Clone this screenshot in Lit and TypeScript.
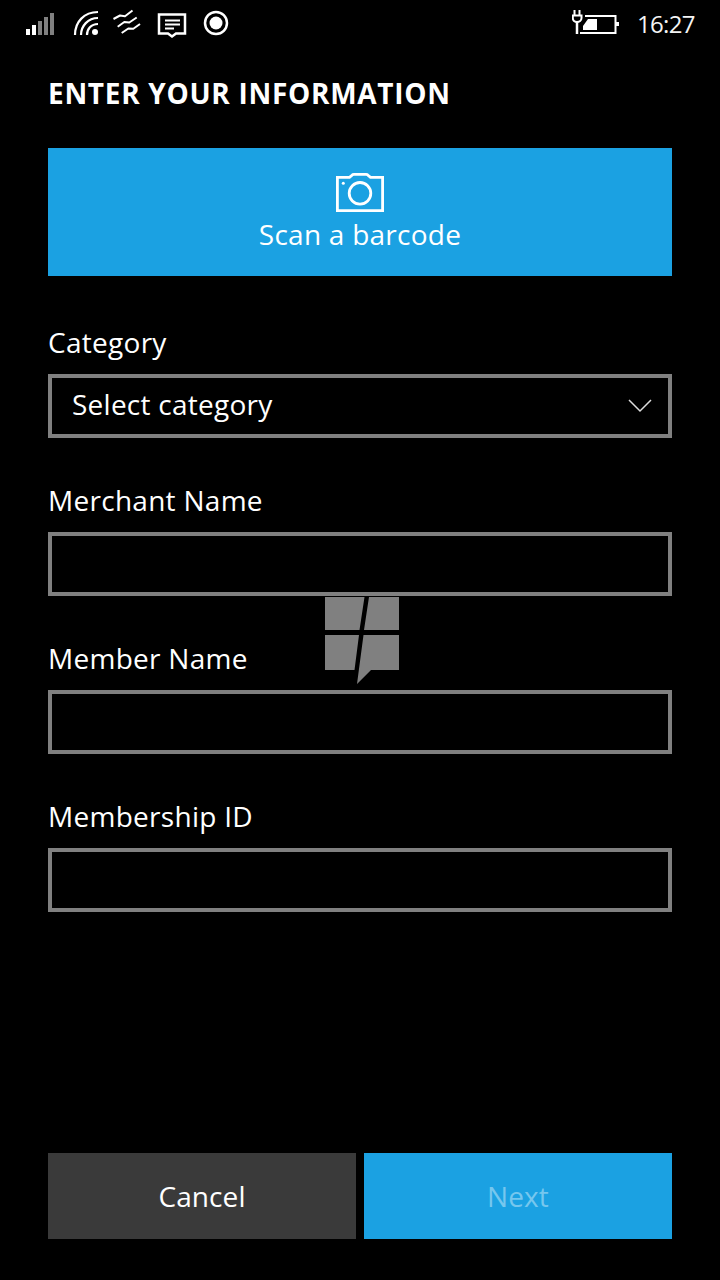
import { LitElement, html, css } from "lit";
import { customElement } from "lit/decorators.js";

@customElement("app-root")
class AppRoot extends LitElement {
  static styles = css`
    :host { display: block; width: 720px; height: 1280px; background: #000; color: #fff; font-family: "Open Sans", "Noto Sans", sans-serif; position: relative; overflow: hidden; }
    .status { height: 48px; display: flex; align-items: flex-start; }
    .status svg { display: block; flex: none; }
    .time { font-size: 24px; line-height: 48px; font-weight: 400; width: 57px; margin: 0 26px 0 15px; letter-spacing: -0.7px; color: #f4f4f4; white-space: nowrap; }
    .spacer { flex: 1; }
    .content { display: flex; flex-direction: column; padding: 0 48px; height: 1232px; box-sizing: border-box; }
    h1 { margin: 27px 0 0; font-size: 28px; line-height: 36px; font-weight: 700; height: 37px; letter-spacing: 0.7px; }
    .scan { margin-top: 36px; height: 128px; background: #1ba1e2; display: flex; flex-direction: column; align-items: center; box-sizing: border-box; padding-top: 24px; }
    .scan span { font-size: 28px; line-height: 40px; margin-top: 2px; letter-spacing: 0.25px; }
    .field { display: flex; flex-direction: column; margin-top: 48px; }
    label { font-size: 28px; line-height: 36px; height: 50px; letter-spacing: 0.28px; }
    .box { height: 64px; border: 4px solid #808080; box-sizing: border-box; display: flex; align-items: center; justify-content: space-between; padding: 0 16px 0 20px; font-size: 28px; letter-spacing: 0.25px; }
    .box span { position: relative; top: -2px; }
    .field + .field { margin-top: 44px; }
    .actions { margin-top: auto; margin-bottom: 41px; display: flex; gap: 8px; }
    .btn { flex: 1; height: 86px; display: flex; align-items: center; justify-content: center; font-size: 28px; letter-spacing: 0.1px; }
    .cancel { background: #3a3a3a; }
    .next { background: #1ba1e2; color: #76c7ee; }
    .logo { position: absolute; left: 325px; top: 597px; display: block; }
  `;

  render() {
    return html`
      <div class="status">
        <svg width="240" height="48" viewBox="0 0 240 48" fill="none">
          <g fill="#fff"><rect x="26" y="29" width="4" height="6"/><rect x="32" y="25" width="4" height="10"/></g>
          <g fill="#808080"><rect x="38" y="21" width="4" height="14"/><rect x="44" y="17" width="4" height="18"/><rect x="50" y="13" width="4" height="22"/></g>
          <g stroke="#fff" stroke-width="2.2">
            <path d="M75 35C75 22 84 12 98 12"/>
            <path d="M81 35C81 26 88 18 98 18" />
            <path d="M87 35C87 29 91 24 98 24" />
          </g>
          <circle cx="95" cy="32" r="3" fill="#fff"/>
          <g stroke="#fff" stroke-width="2" stroke-linejoin="round">
            <path d="M113.500 19L120 15.500l5 .7L132.500 10.500"/>
            <path d="M117.700 26.700L124.300 22l5 .5L136.700 17.500"/>
            <path d="M121.700 33L128.300 28.500l5 .3L140 24"/>
          </g>
          <path d="M159 14.500h26v19h-9l-4 3-4-3h-9z" stroke="#fff" stroke-width="2.500"/>
          <path d="M165 20.500h15M165 24.500h15M165 28.500h9" stroke="#fff" stroke-width="2"/>
          <circle cx="216" cy="23" r="11" stroke="#fff" stroke-width="2.500"/>
          <circle cx="216" cy="23" r="6.500" fill="#fff"/>
        </svg>
        <div class="spacer"></div>
        <svg width="50" height="48" viewBox="572 0 50 48" fill="none">
          <path d="M574.500 10v6M579.500 10v6" stroke="#fff" stroke-width="2"/>
          <path d="M572.800 15.500v2.500c0 2.500 2 4 4.200 4s4.500-1.500 4.500-4v-2.500z" stroke="#fff" stroke-width="2"/>
          <path d="M577 22v12" stroke="#fff" stroke-width="2.500"/>
          <path d="M585 16h30.500v17H580" stroke="#fff" stroke-width="2"/>
          <path d="M583 30v-4l5-7h9v11z" fill="#fff"/>
          <rect x="616" y="22" width="3" height="4" fill="#fff"/>
        </svg>
        <div class="time">16:27</div>
      </div>
      <div class="content">
        <h1>ENTER YOUR INFORMATION</h1>
        <div class="scan">
          <svg width="48" height="40" viewBox="0 0 48 40" fill="none" stroke="#fff" stroke-width="2.800">
            <path d="M1.400 5.400H13.500L16 3.200c.5-.6 1.200-.8 2-.8h12c.8 0 1.500.2 2 .8l2.500 2.200H46.600V38.600H1.400z" />
            <circle cx="24" cy="21.300" r="10.800"/>
            <circle cx="7.300" cy="11.300" r="1.500" fill="#fff" stroke="none"/>
          </svg>
          <span>Scan a barcode</span>
        </div>
        <div class="field">
          <label>Category</label>
          <div class="box">
            <span>Select category</span>
            <svg width="24" height="14" viewBox="0 0 24 14" fill="none" stroke="#ddd" stroke-width="1.500"><path d="M1 1l11 11L23 1"/></svg>
          </div>
        </div>
        <div class="field"><label>Merchant Name</label><div class="box"></div></div>
        <div class="field"><label>Member Name</label><div class="box"></div></div>
        <div class="field"><label>Membership ID</label><div class="box"></div></div>
        <div class="actions">
          <div class="btn cancel">Cancel</div>
          <div class="btn next">Next</div>
        </div>
      </div>
      <svg class="logo" width="74" height="88" viewBox="0 0 74 88" fill="#808080">
        <path d="M0 0h39.500l-5 33H0zM44 0h30v33H39zM0 38h34l-4.500 35H0zM38.500 38H74v35H46L32 87z"/>
      </svg>
    `;
  }
}
